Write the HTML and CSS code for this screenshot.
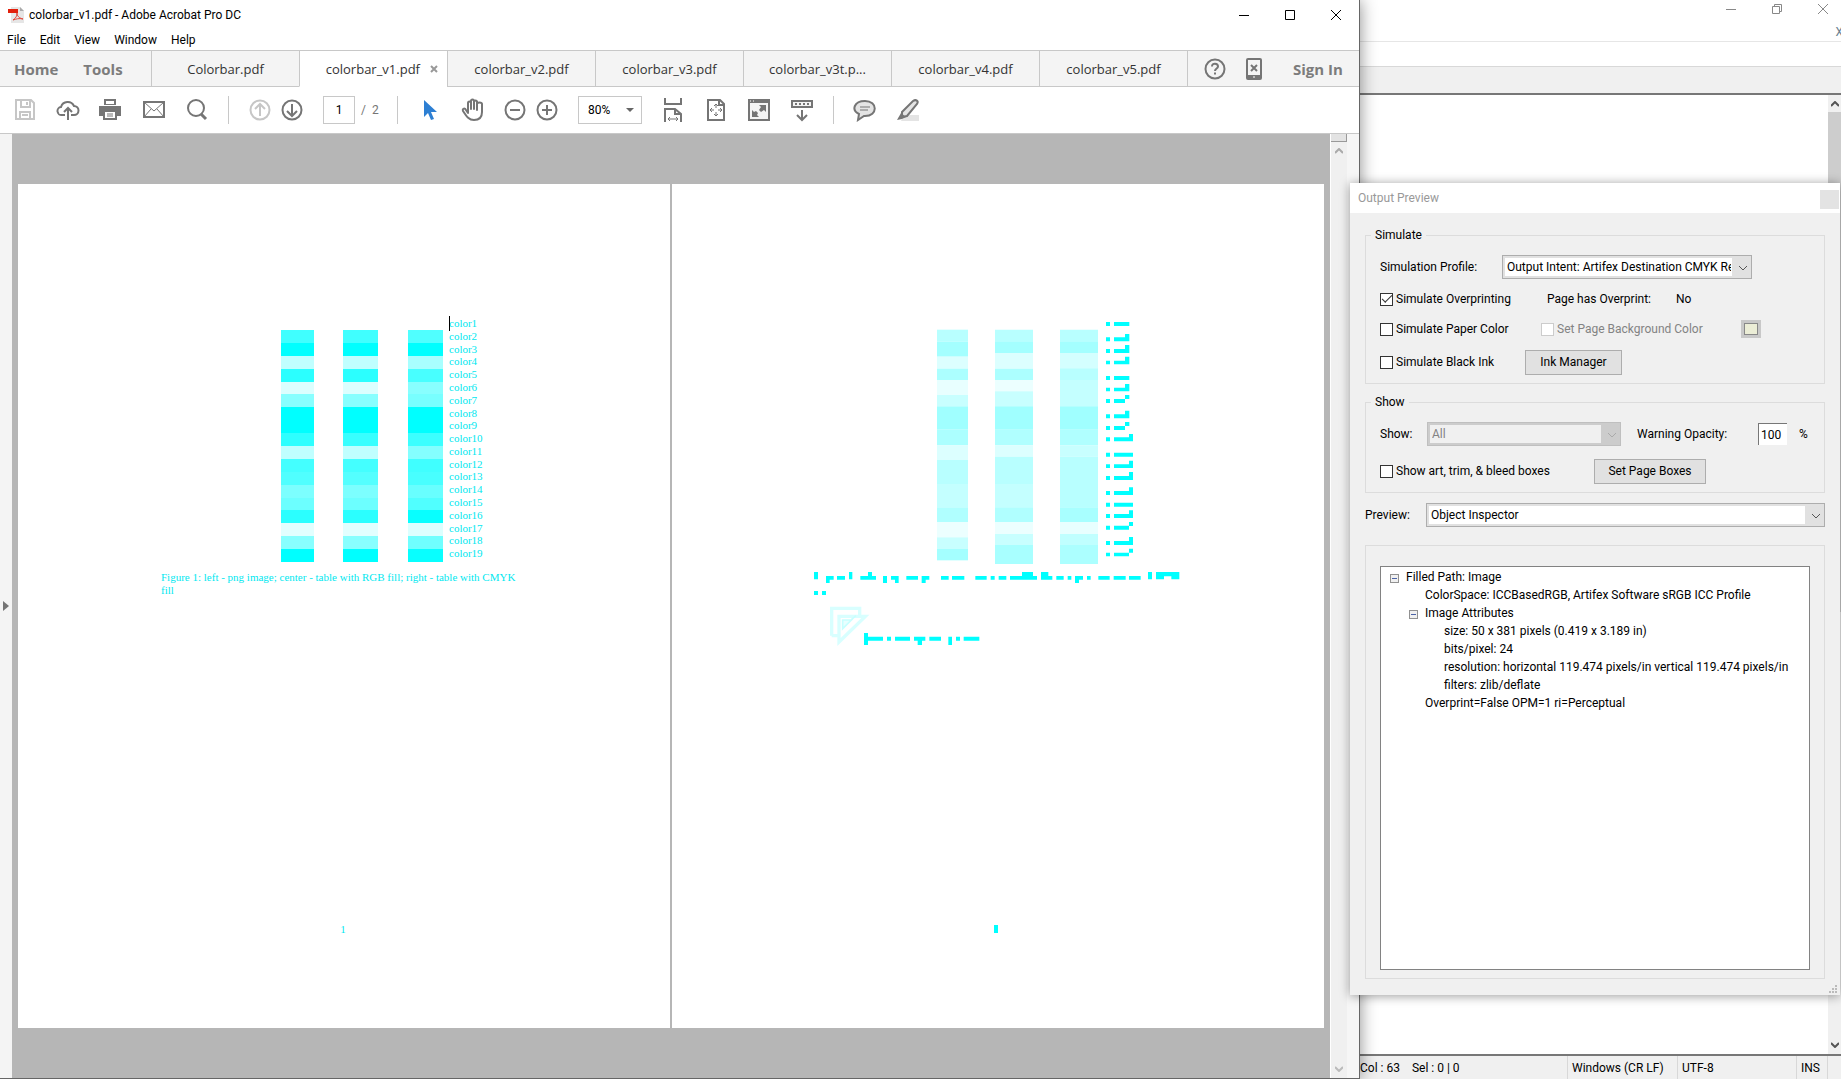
FILE: index.html
```html
<!DOCTYPE html>
<html lang="en">
<head>
  <meta charset="UTF-8">
  <meta name="viewport" content="width=device-width, initial-scale=1.0">
  <title>colorbar_v1.pdf - Adobe Acrobat Pro DC</title>
  <link rel="stylesheet" href="styles.css">
</head>
<body>
<div class="desktop">

  <!-- Acrobat window -->
  <main class="acrobat">
    <header class="titlebar">
      <svg class="app-icon" width="16" height="16" viewBox="0 0 16 16">
        <path d="M3 0h9l4 4v12H3z" fill="#e6e6e6"/>
        <path d="M12 0v4h4z" fill="#aaa"/>
        <path d="M0 2h10v4H0z" fill="#e2200c"/>
        <path d="M5 13c3-2 4-4 4-7 0 3 2 5 6 6-4-1-7 0-10 1z" fill="none" stroke="#e2483a"/>
      </svg>
      <span>colorbar_v1.pdf - Adobe Acrobat Pro DC</span>
      <div class="win-controls">
        <button aria-label="Minimize"><svg width="12" height="12"><path d="M1 6.500h10"/></svg></button>
        <button aria-label="Maximize"><svg width="12" height="12"><path d="M1.500 1.500h9v9h-9z"/></svg></button>
        <button aria-label="Close"><svg width="12" height="12"><path d="M1 1l10 10M11 1L1 11"/></svg></button>
      </div>
    </header>

    <nav class="menubar">
      <button>File</button>
      <button>Edit</button>
      <button>View</button>
      <button>Window</button>
      <button>Help</button>
    </nav>

    <nav class="tabs">
      <div class="home">
        <button>Home</button>
        <button>Tools</button>
      </div>
      <button class="tab">Colorbar.pdf</button>
      <div class="tab active">
        <button>colorbar_v1.pdf</button>
        <button class="tab-close" aria-label="Close tab"><svg width="8" height="8"><path d="M1 1l6 6M7 1L1 7" stroke="#999" stroke-width="2"/></svg></button>
      </div>
      <button class="tab">colorbar_v2.pdf</button>
      <button class="tab">colorbar_v3.pdf</button>
      <button class="tab">colorbar_v3t.p...</button>
      <button class="tab">colorbar_v4.pdf</button>
      <button class="tab">colorbar_v5.pdf</button>
      <div class="account">
        <button aria-label="Help">
          <svg width="22" height="22" viewBox="0 0 22 22"><circle cx="11" cy="11" r="9.500" fill="none" stroke="#757575" stroke-width="2"/><path d="M8 8.500c0-4 6-3.500 6 0 0 2-3 2-3 4.500M11 14.500v2" fill="none" stroke="#757575" stroke-width="2"/></svg>
        </button>
        <button aria-label="Mobile">
          <svg width="16" height="22" viewBox="0 0 16 22"><rect x="1" y="1" width="14" height="20" rx="1" fill="#f4f4f4" stroke="#757575" stroke-width="2"/><path d="M1 17h14v4H1z" fill="#757575"/><path d="M5 7l6 6M11 7l-6 6" stroke="#757575" stroke-width="2"/><path d="M7 19h2" stroke="#fff"/></svg>
        </button>
        <button>Sign In</button>
      </div>
    </nav>

    <div class="toolbar">
      <button aria-label="Save" disabled>
        <svg viewBox="0 0 24 24"><g fill="none" stroke="#c6c6c6" stroke-width="2"><path d="M3 2h15l3 3v16H3z"/><path d="M8 2v7h9V2M7 21v-7h10v7M14 4v3M9 17h6"/></g></svg>
      </button>
      <button aria-label="Upload">
        <svg viewBox="0 0 24 24"><g fill="none" stroke="#757575" stroke-width="2"><path d="M9 17H6a4 4 0 0 1-1-8 7 7 0 0 1 13-1 4 4 0 0 1 0 9h-3"/><path d="M12 22V11M8 14l4-4 4 4"/></g></svg>
      </button>
      <button aria-label="Print">
        <svg viewBox="0 0 24 24"><path d="M5 1h12v6H5zM0 8h22v10h-4v-4H4v4H0z" fill="#757575"/><path d="M7 3h8v3H7z" fill="#fff"/><path d="M5 13h12v8H5z" fill="#fff" stroke="#757575" stroke-width="2"/><path d="M8 16h6M8 18h6" stroke="#757575"/></svg>
      </button>
      <button aria-label="Email">
        <svg viewBox="0 0 24 24"><path d="M2 4h20v15H2z" fill="none" stroke="#757575" stroke-width="2"/><path d="M2 4l10 9 10-9M2 19l7-8M22 19l-7-8" fill="none" stroke="#757575"/></svg>
      </button>
      <button aria-label="Search">
        <svg viewBox="0 0 24 24"><circle cx="11" cy="10" r="8" fill="none" stroke="#757575" stroke-width="2"/><path d="M16 16l5 5" stroke="#757575" stroke-width="3"/></svg>
      </button>
      <i class="sep"></i>
      <div class="pair">
        <button aria-label="Previous page" disabled>
          <svg viewBox="0 0 24 24"><g fill="none" stroke="#c6c6c6" stroke-width="2"><circle cx="12" cy="12" r="9.500"/><path d="M12 18V7M7 11l5-5 5 5"/></g></svg>
        </button>
        <button aria-label="Next page">
          <svg viewBox="0 0 24 24"><g fill="none" stroke="#757575" stroke-width="2"><circle cx="12" cy="12" r="9.500"/><path d="M12 6v11M7 13l5 5 5-5"/></g></svg>
        </button>
      </div>
      <div class="page-no">
        <input type="text" value="1" aria-label="Page number">
        <span>/&nbsp; 2</span>
      </div>
      <i class="sep"></i>
      <button aria-label="Select">
        <svg viewBox="0 0 24 24"><path d="M7 2v17l4-4 3 7 3-1-3-7h6z" fill="#2d7fd3"/></svg>
      </button>
      <button aria-label="Hand">
        <svg viewBox="0 0 24 24"><path d="M8 13V5c0-2 3-2 3 0v6V3c0-2 3-2 3 0v8V4c0-2 3-2 3 0v8V6c0-2 5-2 5 0v8c0 5-3 8-8 8-5 0-7-3-11-9-1-3 2-3 3-1l2 3z" fill="none" stroke="#757575" stroke-width="2" stroke-linejoin="round"/></svg>
      </button>
      <div class="pair">
        <button aria-label="Zoom out">
          <svg viewBox="0 0 24 24"><g fill="none" stroke="#757575" stroke-width="2"><circle cx="12" cy="12" r="9.500"/><path d="M7 12h10"/></g></svg>
        </button>
        <button aria-label="Zoom in">
          <svg viewBox="0 0 24 24"><g fill="none" stroke="#757575" stroke-width="2"><circle cx="12" cy="12" r="9.500"/><path d="M7 12h10M12 7v10"/></g></svg>
        </button>
      </div>
      <div class="zoom">
        <select aria-label="Zoom"><option>80%</option></select>
        <svg class="arrow" viewBox="0 0 8 4"><path d="M0 0h8L4 4z" fill="#666"/></svg>
      </div>
      <button aria-label="Fit width">
        <svg viewBox="0 0 24 24"><g fill="none" stroke="#757575" stroke-width="2"><path d="M4 0v6h16V0M4 24V11h10l6 5v8M14 11v5h6"/></g><path d="M7 21h10M9 19l-2 2 2 2M15 19l2 2-2 2" fill="none" stroke="#757575"/></svg>
      </button>
      <button aria-label="Fit page">
        <svg viewBox="0 0 24 24"><path d="M4 2h12l4 4v16H4zM15 2v5h5" fill="none" stroke="#757575" stroke-width="2"/><path d="M12 10V6M12 14v4M10 12H6M14 12h4M10 8l2-2 2 2M10 16l2 2 2-2M8 10l-2 2 2 2M16 10l2 2-2 2" fill="none" stroke="#757575"/></svg>
      </button>
      <button aria-label="Full screen">
        <svg viewBox="0 0 24 24"><path d="M1 1h22v22H1z" fill="#757575"/><path d="M3 5h18v16H3z" fill="#f4f4f4"/><path d="M12 7h7v7l-2-2-3 2-2-2 2-3zM5 12l2 2 2-1 2 2-1 2 2 2H5z" fill="#757575"/><path d="M3 3h1M6 3h1" stroke="#fff"/></svg>
      </button>
      <button aria-label="Read mode">
        <svg viewBox="0 0 24 24"><path d="M2 3h20v6H2z" fill="#f4f4f4" stroke="#757575" stroke-width="2"/><path d="M5 6h14" stroke="#757575" stroke-width="2" stroke-dasharray="2 2"/><path d="M12 12v10M7 17l5 5 5-5" fill="none" stroke="#757575" stroke-width="2"/></svg>
      </button>
      <i class="sep"></i>
      <button aria-label="Comment">
        <svg viewBox="0 0 24 24"><path d="M12 3c13 0 13 15 0 15h-1l-6 4 1-6C-2 12 1 3 12 3z" fill="#e4e4e4" stroke="#757575" stroke-width="2"/><path d="M7 9h10M7 12h8" stroke="#757575"/></svg>
      </button>
      <button aria-label="Highlight">
        <svg viewBox="0 0 24 24"><path d="M8 17h15v6H5z" fill="#e4e4e4"/><path d="M6 14L17 3c3-2 6 0 4 3L11 18l-5 1z" fill="#e4e4e4" stroke="#757575" stroke-width="2"/><path d="M5 15l5 4-4 2-5 1z" fill="#757575"/></svg>
      </button>
    </div>

    <div class="document">
      <button class="pane-toggle" aria-label="Open navigation pane"><svg width="6" height="10"><path d="M0 0l6 5-6 5z" fill="#757575"/></svg></button>

      <div class="pages">
        <section class="page page-one">
          <div class="figure">
            <svg class="bars" width="162" height="232" viewBox="0 0 162 18" preserveAspectRatio="none" shape-rendering="crispEdges">
              <g id="left-bar">
                <path d="M0 0h33v1H0z" fill="#40ffff"/><path d="M0 1h33v1H0z" fill="#00ffff"/>
                <path d="M0 2h33v1H0z" fill="#c0ffff"/><path d="M0 3h33v1H0z" fill="#2bffff"/>
                <path d="M0 4h33v1H0z" fill="#dcffff"/><path d="M0 5h33v1H0z" fill="#88ffff"/>
                <path d="M0 6h33v2H0z" fill="#00ffff"/><path d="M0 8h33v1H0z" fill="#2effff"/>
                <path d="M0 9h33v1H0z" fill="#c0ffff"/><path d="M0 10h33v1H0z" fill="#44ffff"/>
                <path d="M0 11h33v1H0z" fill="#50ffff"/><path d="M0 12h33v1H0z" fill="#7cffff"/>
                <path d="M0 13h33v1H0z" fill="#6cffff"/><path d="M0 14h33v1H0z" fill="#2bffff"/>
                <path d="M0 15h33v1H0z" fill="#e2ffff"/><path d="M0 16h33v1H0z" fill="#88ffff"/>
                <path d="M0 17h33v1H0z" fill="#00ffff"/>
              </g>
              <g id="center-bar">
                <path d="M62 0h35v1H62z" fill="#40ffff"/><path d="M62 1h35v1H62z" fill="#00ffff"/>
                <path d="M62 2h35v1H62z" fill="#c0ffff"/><path d="M62 3h35v1H62z" fill="#2bffff"/>
                <path d="M62 4h35v1H62z" fill="#dcffff"/><path d="M62 5h35v1H62z" fill="#88ffff"/>
                <path d="M62 6h35v2H62z" fill="#00ffff"/><path d="M62 8h35v1H62z" fill="#38ffff"/>
                <path d="M62 9h35v1H62z" fill="#c0ffff"/><path d="M62 10h35v1H62z" fill="#44ffff"/>
                <path d="M62 11h35v1H62z" fill="#54ffff"/><path d="M62 12h35v1H62z" fill="#7cffff"/>
                <path d="M62 13h35v1H62z" fill="#6cffff"/><path d="M62 14h35v1H62z" fill="#2bffff"/>
                <path d="M62 15h35v1H62z" fill="#e2ffff"/><path d="M62 16h35v1H62z" fill="#88ffff"/>
                <path d="M62 17h35v1H62z" fill="#00ffff"/>
              </g>
              <g id="right-bar">
                <path d="M127 0h35v1h-35z" fill="#50ffff"/><path d="M127 1h35v1h-35z" fill="#00ffff"/>
                <path d="M127 2h35v1h-35z" fill="#a8ffff"/><path d="M127 3h35v1h-35z" fill="#48ffff"/>
                <path d="M127 4h35v1h-35z" fill="#88ffff"/><path d="M127 5h35v1h-35z" fill="#78ffff"/>
                <path d="M127 6h35v2h-35z" fill="#00ffff"/><path d="M127 8h35v1h-35z" fill="#3cffff"/>
                <path d="M127 9h35v1h-35z" fill="#84ffff"/><path d="M127 10h35v1h-35z" fill="#40ffff"/>
                <path d="M127 11h35v1h-35z" fill="#48ffff"/><path d="M127 12h35v1h-35z" fill="#68ffff"/>
                <path d="M127 13h35v1h-35z" fill="#50ffff"/><path d="M127 14h35v1h-35z" fill="#08ffff"/>
                <path d="M127 15h35v1h-35z" fill="#dcffff"/><path d="M127 16h35v1h-35z" fill="#70ffff"/>
                <path d="M127 17h35v1h-35z" fill="#08ffff"/>
              </g>
            </svg>
            <ul class="names">
              <li>color1</li><li>color2</li><li>color3</li><li>color4</li><li>color5</li>
              <li>color6</li><li>color7</li><li>color8</li><li>color9</li><li>color10</li>
              <li>color11</li><li>color12</li><li>color13</li><li>color14</li><li>color15</li>
              <li>color16</li><li>color17</li><li>color18</li><li>color19</li>
            </ul>
          </div>
          <p class="caption">Figure 1: left - png image; center - table with RGB fill; right - table with CMYK<br>fill</p>
          <p class="folio">1</p>
        </section>

        <section class="page page-two">
          <!-- page still loading, drawn as coarse blocks, 3 units to a pixel -->
          <svg width="400" height="350" viewBox="0 0 1200 1050">
            <g>
              <path d="M411 74h93v36h-93z" fill="#b8ffff"/><path d="M411 110h93v45h-93z" fill="#a4ffff"/>
              <path d="M411 155h93v36h-93z" fill="#dcffff"/><path d="M411 191h93v34h-93z" fill="#acffff"/>
              <path d="M411 225h93v45h-93z" fill="#e8ffff"/><path d="M411 270h93v34h-93z" fill="#c8ffff"/>
              <path d="M411 304h93v70h-93z" fill="#a0ffff"/><path d="M411 374h93v47h-93z" fill="#acffff"/>
              <path d="M411 421h93v44h-93z" fill="#dcffff"/><path d="M411 465h93v72h-93z" fill="#b8ffff"/>
              <path d="M411 537h93v70h-93z" fill="#c4ffff"/><path d="M411 607h93v44h-93z" fill="#b0ffff"/>
              <path d="M411 651h93v46h-93z" fill="#ecffff"/><path d="M411 697h93v34h-93z" fill="#c8ffff"/>
              <path d="M411 731h93v35h-93z" fill="#a4ffff"/>
            </g>
            <g>
              <path d="M585 74h114v35H585z" fill="#b8ffff"/><path d="M585 109h114v35H585z" fill="#a4ffff"/>
              <path d="M585 144h114v47H585z" fill="#dcffff"/><path d="M585 191h114v34H585z" fill="#acffff"/>
              <path d="M585 225h114v34H585z" fill="#ecffff"/><path d="M585 259h114v45H585z" fill="#c8ffff"/>
              <path d="M585 304h114v70H585z" fill="#a0ffff"/><path d="M585 374h114v47H585z" fill="#b0ffff"/>
              <path d="M585 421h114v34H585z" fill="#dcffff"/><path d="M585 455h114v82H585z" fill="#b8ffff"/>
              <path d="M585 537h114v70H585z" fill="#c4ffff"/><path d="M585 607h114v44H585z" fill="#b0ffff"/>
              <path d="M585 651h114v36H585z" fill="#ecffff"/><path d="M585 687h114v33H585z" fill="#c8ffff"/>
              <path d="M585 720h114v57H585z" fill="#a8ffff"/>
            </g>
            <g>
              <path d="M780 74h114v35H780z" fill="#b8ffff"/><path d="M780 109h114v35H780z" fill="#a4ffff"/>
              <path d="M780 144h114v46H780z" fill="#d4ffff"/><path d="M780 190h114v35H780z" fill="#b8ffff"/>
              <path d="M780 225h114v79H780z" fill="#c4ffff"/><path d="M780 304h114v70H780z" fill="#a0ffff"/>
              <path d="M780 374h114v47H780z" fill="#b0ffff"/><path d="M780 421h114v34H780z" fill="#c8ffff"/>
              <path d="M780 455h114v152H780z" fill="#b8ffff"/><path d="M780 607h114v44H780z" fill="#a8ffff"/>
              <path d="M780 651h114v36H780z" fill="#e8ffff"/><path d="M780 687h114v33H780z" fill="#c0ffff"/>
              <path d="M780 720h114v57H780z" fill="#acffff"/>
            </g>
            <g fill="#00ffff">
              <path d="M918 51h12v12h-12zM942 51h46v12h-46z"/>
              <path d="M918 97h12v12h-12zM942 97h33v-10h13v22h-46z"/>
              <path d="M918 132h12v12h-12zM942 132h33v-12h13v24h-46z"/>
              <path d="M918 167h12v11h-12zM942 167h33v-12h13v23h-46z"/>
              <path d="M918 213h12v12h-12zM942 213h46v12h-46z"/>
              <path d="M918 248h12v11h-12zM942 248h33v-11h13v22h-46z"/>
              <path d="M918 282h12v12h-12zM942 282h33v-12h13v12h-13v12h-33z"/>
              <path d="M918 328h12v12h-12zM942 328h33v-11h13v23h-46z"/>
              <path d="M918 363h12v12h-12zM942 363h33v-12h13v12h-13v12h-33z"/>
              <path d="M918 397h12v12h-12zM942 397h45v-10h12v22h-57z"/>
              <path d="M918 443h12v12h-12zM942 443h57v12h-57z"/>
              <path d="M918 478h12v11h-12zM942 478h45v-11h12v22h-57z"/>
              <path d="M918 513h12v12h-12zM942 513h45v-12h12v24h-57z"/>
              <path d="M918 558h12v12h-12zM942 558h45v-11h12v23h-57z"/>
              <path d="M918 593h12v12h-12zM942 593h57v12h-57z"/>
              <path d="M918 627h12v12h-12zM942 627h45v-11h12v23h-57z"/>
              <path d="M918 662h12v12h-12zM942 662h45v-11h12v12h-12v11h-45z"/>
              <path d="M918 708h12v12h-12zM942 708h45v-12h12v24h-57z"/>
              <path d="M918 743h12v11h-12zM942 743h45v-12h12v12h-12v11h-45z"/>
              <!-- caption -->
              <path d="M42 801h12v22H42zM78 813h23v11H89v10H78zM111 813h24v11h-24zM147 801h10v22h-10zM181 813h23v-12h12v12h12v11h-47zM249 813h12v21h-12zM273 813h23v21h-11v-10h-12zM319 813h35v11h-35zM365 813h23v11h-11v10h-12zM423 813h23v11h-23zM456 813h37v11h-37z"/>
              <path d="M526 813h34v11h-34zM572 813h12v11h-12zM596 813h23v11h-23zM630 813h24v11h-24zM666 801h33v12h12v11h-57v-11h12zM723 801h22v12h12v11h-34zM769 813h22v11h-22zM803 813h11v11h-11zM825 813h24v11h-12v10h-12zM861 813h11v11h-11zM895 813h34v11h-34zM941 813h36v11h-36zM987 813h35v11h-35zM1044 801h12v22h-12zM1068 801h70v22h-24v-9h-22v9h-24z"/>
              <path d="M42 858h12v12H42zM66 858h12v12H66z"/>
              <!-- logo line -->
              <path d="M192 984h12v11h45v12h-45v13h-12zM261 995h12v12h-12zM285 995h45v12h-45zM342 995h34v12h-10v13h-13v-13h-11zM388 995h35v12h-35zM445 995h11v25h-11zM468 995h12v12h-12zM491 995h47v12h-47z"/>
            </g>
            <path d="M95 992V910h84v24h17l-79 77v-77h62M95 992h22" fill="none" stroke="#d8ffff" stroke-width="10"/>
            <path d="M128 945h26l-26 26zM168 932l-14 12" fill="#e8ffff" stroke="#c8ffff" stroke-width="5"/>
          </svg>
          <i class="folio-block"></i>
        </section>
      </div>

      <div class="scrollbar">
        <i class="splitter"></i>
        <svg width="8" height="6"><path d="M0 5l4-4 4 4" stroke="#aaa" stroke-width="2"/></svg>
        <svg class="down" width="8" height="6"><path d="M0 1l4 4 4-4" stroke="#bbb" stroke-width="2"/></svg>
      </div>
      <div class="side-strip"></div>
    </div>
  </main>

  <!-- text editor behind -->
  <aside class="editor">
    <header class="editor-title">
      <div class="win-controls">
        <button aria-label="Minimize"><svg width="12" height="12"><path d="M1 6.500h10"/></svg></button>
        <button aria-label="Restore"><svg width="12" height="12"><path d="M1.500 3.500h7v7h-7zM3.500 3.500v-2h7v7h-2"/></svg></button>
        <button aria-label="Close"><svg width="12" height="12"><path d="M1 1l10 10M11 1L1 11"/></svg></button>
      </div>
      <span class="doc-close">X</span>
    </header>
    <div class="editor-tools"></div>
    <div class="editor-tabs"></div>
    <div class="editor-body">
      <div class="editor-text"></div>
      <div class="editor-scroll">
        <svg width="8" height="6"><path d="M0 5l4-4 4 4" stroke="#555" stroke-width="2"/></svg>
        <i class="thumb"></i>
        <svg width="8" height="6"><path d="M0 1l4 4 4-4" stroke="#555" stroke-width="2"/></svg>
      </div>
    </div>
    <footer class="statusbar">
      <span class="caret-pos"><span>Col : 63</span><span>Sel : 0 | 0</span></span>
      <span class="eol">Windows (CR LF)</span>
      <span class="enc">UTF-8</span>
      <span class="ins">INS</span>
      <span class="grip"></span>
    </footer>
  </aside>

  <!-- Output Preview dialog -->
  <form class="dialog">
    <header class="dialog-title">
      <span>Output Preview</span>
      <button type="button" aria-label="Close"></button>
    </header>
    <div class="dialog-body">
      <fieldset>
        <legend>Simulate</legend>
        <div class="row combo-row">
          <label class="profile-label" for="profile">Simulation Profile:</label>
          <div class="combo profile">
            <select id="profile"><option>Output Intent: Artifex Destination CMYK Reference</option></select>
            <svg class="chevron" viewBox="0 0 10 6"><path d="M1 1l4 4 4-4"/></svg>
          </div>
        </div>
        <div class="row">
          <label class="check first"><input type="checkbox" checked>Simulate Overprinting</label>
          <span class="overprint">Page has Overprint:</span>
          <span>No</span>
        </div>
        <div class="row">
          <label class="check paper"><input type="checkbox">Simulate Paper Color</label>
          <label class="check background"><input type="checkbox" disabled>Set Page Background Color</label>
          <button type="button" class="swatch" aria-label="Background color" disabled></button>
        </div>
        <div class="row button-row">
          <label class="check ink"><input type="checkbox">Simulate Black Ink</label>
          <button type="button" class="push ink-manager">Ink Manager</button>
        </div>
      </fieldset>

      <fieldset class="show">
        <legend>Show</legend>
        <div class="row combo-row">
          <label class="show-label" for="show">Show:</label>
          <div class="combo show-combo">
            <select id="show" disabled><option>All</option></select>
            <svg class="chevron" viewBox="0 0 10 6"><path d="M1 1l4 4 4-4"/></svg>
          </div>
          <label class="opacity-label" for="opacity">Warning Opacity:</label>
          <input class="opacity" id="opacity" type="text" value="100">
          <span>%</span>
        </div>
        <div class="row button-row">
          <label class="check boxes"><input type="checkbox">Show art, trim, &amp; bleed boxes</label>
          <button type="button" class="push page-boxes">Set Page Boxes</button>
        </div>
      </fieldset>

      <div class="row combo-row preview">
        <label class="preview-label" for="preview">Preview:</label>
        <div class="combo preview-combo">
          <select id="preview"><option>Object Inspector</option></select>
          <svg class="chevron" viewBox="0 0 10 6"><path d="M1 1l4 4 4-4"/></svg>
        </div>
      </div>

      <div class="inspector">
        <ul class="tree">
          <li class="open"><i class="toggle"></i>Filled Path: Image
            <ul>
              <li>ColorSpace: ICCBasedRGB, Artifex Software sRGB ICC Profile</li>
              <li class="open"><i class="toggle"></i>Image Attributes
                <ul>
                  <li>size: 50 x 381 pixels (0.419 x 3.189 in)</li>
                  <li>bits/pixel: 24</li>
                  <li>resolution: horizontal 119.474 pixels/in vertical 119.474 pixels/in</li>
                  <li>filters: zlib/deflate</li>
                </ul>
              </li>
              <li>Overprint=False OPM=1 ri=Perceptual</li>
            </ul>
          </li>
        </ul>
      </div>
    </div>
    <svg class="resize-grip" width="9" height="9"><path d="M7 0h2v2H7zM7 3h2v2H7zM7 6h2v2H7zM4 3h2v2H4zM4 6h2v2H4zM1 6h2v2H1z" fill="#bbb"/></svg>
  </form>
</div>
</body>
</html>
```

FILE: styles.css
```css
* {
  box-sizing: border-box;
}
body {
  margin: 0;
  font-family: Roboto, "Open Sans", sans-serif;
  font-size: 12px;
  line-height: 16px;
  color: #000;
}
button, input, select {
  font: inherit;
  color: inherit;
  margin: 0;
  padding: 0;
  border: 0;
  background: none;
}
ul, p {
  margin: 0;
  padding: 0;
  list-style: none;
}
svg {
  display: block;
  flex: none;
}
.desktop {
  position: relative;
  display: grid;
  grid-template-columns: minmax(0, 1fr) 481px;
  height: 100vh;
  overflow: hidden;
}

/* Acrobat */
.acrobat {
  display: flex;
  flex-direction: column;
  min-height: 0;
  z-index: 1;
  background: #fff;
  border-right: 1px solid #666;
  border-bottom: 1px solid #666;
  box-shadow: 0 0 16px rgba(0, 0, 0, 0.45);
}
.titlebar {
  display: flex;
  align-items: center;
  gap: 5px;
  height: 29px;
  padding-left: 8px;
}
.win-controls {
  display: flex;
  margin-left: auto;
}
.win-controls button {
  display: grid;
  place-items: center;
  width: 46px;
  height: 28px;
}
.win-controls path {
  fill: none;
  stroke: #000;
}
.menubar {
  display: flex;
  align-items: center;
  gap: 14px;
  height: 22px;
  padding-left: 7px;
  border-bottom: 1px solid #c8c8c8;
}
.tabs {
  display: flex;
  height: 36px;
  background: #f4f4f4;
  font-family: "Open Sans", sans-serif;
  font-size: 13px;
  color: #333;
}
.home {
  display: flex;
  gap: 25px;
  width: 151px;
  padding-left: 14px;
  border-bottom: 1px solid #c8c8c8;
}
.home button, .account button {
  font-size: 15px;
  font-weight: 700;
  color: #7c7c7c;
}
.tab {
  flex: 0 0 148px;
  border-left: 1px solid #c8c8c8;
  border-bottom: 1px solid #c8c8c8;
}
.tab.active {
  display: flex;
  justify-content: flex-end;
  align-items: center;
  gap: 10px;
  padding-right: 9px;
  background: #fff;
  border-bottom-color: #fff;
}
.account {
  flex: 1;
  display: flex;
  align-items: center;
  gap: 20px;
  padding-left: 16px;
  border-left: 1px solid #c8c8c8;
  border-bottom: 1px solid #c8c8c8;
}
.account button:last-child {
  margin-left: 11px;
}
.toolbar {
  display: flex;
  align-items: center;
  gap: 19px;
  height: 47px;
  padding-left: 13px;
  border-bottom: 1px solid #c8c8c8;
}
.toolbar button, .toolbar button svg {
  width: 24px;
  height: 24px;
}
.pair {
  display: flex;
  gap: 8px;
}
.sep {
  width: 1px;
  height: 28px;
  background: #c8c8c8;
}
.page-no {
  display: flex;
  align-items: center;
  gap: 6px;
  width: 55px;
  color: #757575;
}
.page-no input {
  width: 32px;
  height: 28px;
  border: 1px solid #c8c8c8;
  text-align: center;
  color: #000;
}
.page-no span {
  white-space: nowrap;
}
.zoom {
  position: relative;
}
.zoom select {
  width: 64px;
  height: 28px;
  padding-left: 9px;
  border: 1px solid #c8c8c8;
  appearance: none;
}
.arrow {
  position: absolute;
  right: 8px;
  top: 12px;
  width: 8px;
  height: 4px;
}
.document {
  flex: 1;
  display: flex;
  min-height: 0;
  background: #b6b6b6;
}
.pane-toggle {
  display: grid;
  place-items: center;
  width: 12px;
  background: #f4f4f4;
}
.pages {
  flex: 1;
  display: grid;
  grid-template-columns: 1fr 1fr;
  gap: 2px;
  padding: 50px 6px 50px;
}
.page {
  display: flex;
  flex-direction: column;
  background: #fff;
  font-family: "Liberation Serif", serif;
  font-size: 11px;
  line-height: 13px;
  color: #00e8f0;
}
.page-one {
  padding-top: 133px;
}
.figure {
  display: flex;
  gap: 6px;
  margin-left: 263px;
}
.bars {
  margin-top: 13px;
}
.names {
  display: grid;
  grid-template-rows: repeat(19, 1fr);
  height: 243px;
  line-height: 12px;
}
.names li:first-child {
  position: relative;
}
.names li:first-child::before {
  content: "";
  position: absolute;
  left: 0;
  top: -1px;
  width: 1px;
  height: 15px;
  background: #000;
}
.caption {
  margin: 9px 0 0 143px;
}
.folio {
  margin: auto 0 92px;
  padding-right: 2px;
  text-align: center;
}
.page-two {
  padding: 121px 0 95px 128px;
}
.folio-block {
  width: 4px;
  height: 8px;
  margin: auto 0 0 194px;
  background: #00ffff;
}
.scrollbar {
  display: flex;
  flex-direction: column;
  align-items: center;
  width: 17px;
  background: #f0f0f0;
  border-left: 1px solid #fff;
}
.scrollbar path, .editor-scroll path {
  fill: none;
}
.splitter {
  width: 16px;
  height: 8px;
  margin-bottom: 6px;
  background: #e3e3e3;
  border: solid #999;
  border-width: 0 1px 1px 0;
}
.scrollbar .down {
  margin: auto 0 6px;
}
.side-strip {
  width: 12px;
  background: #f6f6f6;
}

/* editor */
.editor {
  display: flex;
  flex-direction: column;
  min-height: 0;
  overflow: hidden;
  background: #fff;
}
.editor-title {
  height: 42px;
  overflow: hidden;
  border-bottom: 1px solid #e6e6e6;
}
.editor-title .win-controls {
  justify-content: flex-end;
  gap: 10px;
}
.editor-title button {
  width: 36px;
  height: 18px;
}
.editor-title path {
  stroke: #888;
}
.doc-close {
  display: block;
  margin-top: 6px;
  margin-right: -2px;
  text-align: right;
  color: #6a7f90;
}
.editor-tools {
  height: 25px;
  border-bottom: 1px solid #d8d8d8;
}
.editor-tabs {
  height: 28px;
  background: #f0f0f0;
  border-bottom: 2px solid #777;
}
.editor-body {
  flex: 1;
  display: flex;
}
.editor-text {
  flex: 1;
}
.editor-scroll {
  display: flex;
  flex-direction: column;
  align-items: center;
  justify-content: space-between;
  gap: 5px;
  width: 13px;
  padding: 6px 0;
  background: #f0f0f0;
}
.thumb {
  width: 13px;
  height: 500px;
  margin-bottom: auto;
  background: #cdcdcd;
}
.statusbar {
  display: flex;
  height: 25px;
  background: #f0f0f0;
  border-top: 2px solid #777;
}
.statusbar > span {
  padding: 4px 0 0 4px;
  border-right: 1px solid #d8d8d8;
  white-space: nowrap;
}
.statusbar .caret-pos {
  flex: 1;
  display: flex;
  gap: 12px;
  padding-left: 0;
}
.eol {
  width: 110px;
}
.enc {
  width: 119px;
}
.ins {
  width: 31px;
}
.statusbar .grip {
  width: 13px;
  border: 0;
}

/* Output Preview */
.dialog {
  position: absolute;
  top: 183px;
  right: 1px;
  bottom: 84px;
  z-index: 2;
  display: flex;
  flex-direction: column;
  width: 490px;
  background: #f0f0f0;
  box-shadow: 0 1px 10px rgba(0, 0, 0, 0.4);
}
.dialog-title {
  display: flex;
  align-items: center;
  justify-content: space-between;
  height: 30px;
  padding: 0 1px 0 8px;
  background: #fff;
  color: #999;
}
.dialog-title button {
  width: 19px;
  height: 19px;
  margin-top: 2px;
  background: #e3e3e3;
}
.dialog-body {
  flex: 1;
  display: flex;
  flex-direction: column;
  padding: 14px 15px 16px;
  white-space: nowrap;
}
fieldset {
  min-width: 0;
  margin: 0 0 10px;
  padding: 12px 14px 8px;
  border: 1px solid #dcdcdc;
}
legend {
  margin-left: -9px;
  padding: 0 4px;
}
.row {
  display: flex;
  align-items: center;
  height: 20px;
  margin-top: 10px;
}
.combo-row {
  height: 24px;
  margin-top: 0;
}
.button-row {
  height: 26px;
}
.show .button-row {
  margin-top: 12px;
}
.check {
  display: flex;
  align-items: center;
  gap: 3px;
}
.check input {
  display: grid;
  place-items: center;
  width: 13px;
  height: 13px;
  border: 1px solid #333;
  background: #fff;
  appearance: none;
}
.check input:checked::before {
  content: "";
  width: 9px;
  height: 4px;
  margin-bottom: 3px;
  border: solid #333;
  border-width: 0 0 1px 1px;
  transform: rotate(-45deg);
}
.check input:disabled {
  border-color: #ccc;
}
.profile-label {
  width: 122px;
}
.profile {
  width: 250px;
}
.first {
  width: 167px;
}
.overprint {
  width: 129px;
}
.paper {
  width: 161px;
}
.background {
  width: 200px;
  color: #838383;
}
.ink {
  width: 145px;
}
.ink-manager {
  width: 97px;
}
.boxes {
  width: 214px;
}
.page-boxes {
  width: 112px;
}
.swatch {
  width: 20px;
  height: 18px;
  background: #ebedd6;
  border: 3px solid #c8c8c8;
  border-width: 3px 4px;
  outline: 1px solid #888;
  outline-offset: -4px;
}
.push {
  height: 25px;
  background: #e1e1e1;
  border: 1px solid #adadad;
}
.combo {
  position: relative;
}
.combo select {
  display: block;
  width: 100%;
  height: 24px;
  padding: 0 20px 0 4px;
  border: 1px solid #adadad;
  background: linear-gradient(#fff, #fff) 2px 2px / calc(100% - 21px) calc(100% - 4px) no-repeat #e1e1e1;
  appearance: none;
}
.combo select:disabled {
  color: #838383;
  background-color: #ccc;
  background-image: linear-gradient(#f0f0f0, #f0f0f0);
  border-color: #bfbfbf;
  opacity: 1;
}
.chevron {
  position: absolute;
  right: 4px;
  top: 10px;
  width: 10px;
  height: 6px;
  fill: none;
  stroke: #555;
}
.show-combo .chevron {
  stroke: #aaa;
}
.show-label {
  width: 47px;
}
.show-combo {
  width: 194px;
}
.opacity-label {
  width: 121px;
  margin-left: 16px;
}
.opacity {
  width: 29px;
  height: 22px;
  margin-right: 12px;
  padding-left: 2px;
  background: #fff;
  border: solid #777;
  border-width: 1px 0 0 1px;
}
.preview-label {
  width: 61px;
}
.preview-combo {
  flex: 1;
}
.inspector {
  flex: 1;
  display: flex;
  margin-top: 18px;
  padding: 20px 14px 8px;
  border: 1px solid #dcdcdc;
}
.tree {
  flex: 1;
  padding: 1px 0 0 6px;
  background: #fff;
  border: 1px solid #828282;
  line-height: 18px;
}
.tree li {
  padding-left: 19px;
}
.toggle {
  float: left;
  width: 9px;
  height: 9px;
  margin: 6px 0 0 -16px;
  border: 1px solid #919191;
  background: linear-gradient(#4b63a7, #4b63a7) center / 5px 1px no-repeat #f0f0f0;
}
.resize-grip {
  position: absolute;
  right: 3px;
  bottom: 1px;
}
```
